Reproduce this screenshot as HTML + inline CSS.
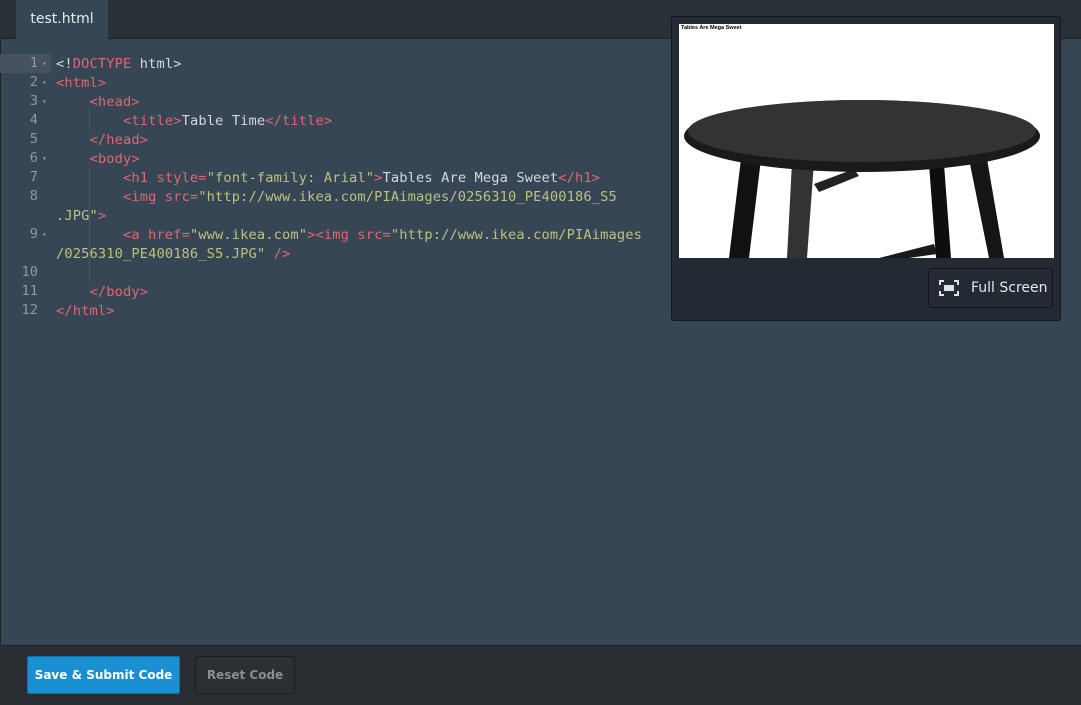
<!DOCTYPE html>
<html><head><style>
body{margin:0;width:1081px;height:704px;background:#374655;position:relative;overflow:hidden;font-family:"DejaVu Sans","Liberation Sans",sans-serif}
.tabbar{position:absolute;left:0;top:0;width:1081px;height:38px;background:#2a3037;border-bottom:1px solid #1d2228}
.tab{position:absolute;left:16px;top:0;width:92px;height:39px;background:#374655;color:#e8eaec;font-size:14px;line-height:38px;text-align:center}
.leftedge{position:absolute;left:0;top:38px;width:1px;height:607px;background:#222}
.code{position:absolute;left:0;top:54px;font-family:"DejaVu Sans Mono","Liberation Mono",monospace;font-size:13.7px;letter-spacing:0.13px;color:#d5d8dc}
.ln{position:absolute;left:0;width:1081px;height:19px;line-height:19px;white-space:pre}
.n{position:absolute;left:0;width:38px;text-align:right;color:#8e98a2;letter-spacing:0}
.a{position:absolute;left:42px;font-size:8px;color:#8e98a2}
.t{position:absolute;left:56px;top:1px}
.hl{position:absolute;left:0;top:0;width:51px;height:19px;background:#46525d}
.g{position:absolute;width:1px;background:#4b5864}
.r{color:#e06670}.s{color:#bcc27e}
.bottom{position:absolute;left:0;top:645px;width:1081px;height:59px;background:#2a2e33;border-top:1px solid #1d2024}
.b1{position:absolute;left:27px;top:656px;width:151px;height:36px;background:#1a8fd1;border:1px solid #0f6fa8;border-radius:2px;color:#fff;font-weight:bold;font-size:12px;line-height:37px;text-align:center}
.b2{position:absolute;left:195px;top:656px;width:98px;height:36px;background:#2c3034;border:1px solid #1b1e21;border-radius:3px;color:#8a8e92;font-weight:bold;font-size:12px;line-height:37px;text-align:center}
.panel{position:absolute;left:671px;top:16px;width:388px;height:303px;background:#232a33;border:1px solid #14181d;border-radius:3px}
.img{position:absolute;left:7px;top:7px;width:375px;height:234px;background:#fff;overflow:hidden}
.fs{position:absolute;left:256px;top:251px;width:123px;height:38px;border:1px solid #111519;border-radius:3px;background:#232a33;color:#e6e8ea;font-size:14px;line-height:38px}
</style></head><body>
<div class="tabbar"><div class="tab">test.html</div></div>
<div class="leftedge"></div>
<div class="code">
<div class="g" style="left:89px;top:57px;height:19px"></div>
<div class="g" style="left:89px;top:114px;height:114px"></div>
<div class="ln" style="top:0"><div class="hl"></div><span class="n">1</span><span class="a">▾</span><span class="t">&lt;!<span class="r">DOCTYPE</span> html&gt;</span></div>
<div class="ln" style="top:19px"><span class="n">2</span><span class="a">▾</span><span class="t r">&lt;html&gt;</span></div>
<div class="ln" style="top:38px"><span class="n">3</span><span class="a">▾</span><span class="t r">    &lt;head&gt;</span></div>
<div class="ln" style="top:57px"><span class="n">4</span><span class="t">        <span class="r">&lt;title&gt;</span>Table Time<span class="r">&lt;/title&gt;</span></span></div>
<div class="ln" style="top:76px"><span class="n">5</span><span class="t r">    &lt;/head&gt;</span></div>
<div class="ln" style="top:95px"><span class="n">6</span><span class="a">▾</span><span class="t r">    &lt;body&gt;</span></div>
<div class="ln" style="top:114px"><span class="n">7</span><span class="t">        <span class="r">&lt;h1 style=</span><span class="s">"font-family: Arial"</span><span class="r">&gt;</span>Tables Are Mega Sweet<span class="r">&lt;/h1&gt;</span></span></div>
<div class="ln" style="top:133px"><span class="n">8</span><span class="t">        <span class="r">&lt;img src=</span><span class="s">"http://www.ikea.com/PIAimages/0256310_PE400186_S5</span></span></div>
<div class="ln" style="top:152px"><span class="t"><span class="s">.JPG"</span><span class="r">&gt;</span></span></div>
<div class="ln" style="top:171px"><span class="n">9</span><span class="a">▾</span><span class="t">        <span class="r">&lt;a href=</span><span class="s">"www.ikea.com"</span><span class="r">&gt;&lt;img src=</span><span class="s">"http://www.ikea.com/PIAimages</span></span></div>
<div class="ln" style="top:190px"><span class="t"><span class="s">/0256310_PE400186_S5.JPG"</span> <span class="r">/&gt;</span></span></div>
<div class="ln" style="top:209px"><span class="n">10</span></div>
<div class="ln" style="top:228px"><span class="n">11</span><span class="t r">    &lt;/body&gt;</span></div>
<div class="ln" style="top:247px"><span class="n">12</span><span class="t r">&lt;/html&gt;</span></div>
</div>
<div class="panel">
<div class="img">
<div style="position:absolute;left:2px;top:1px;font-family:'Liberation Sans',sans-serif;font-size:5.5px;font-weight:bold;color:#000">Tables Are Mega Sweet</div>
<svg width="375" height="234" style="position:absolute;left:0;top:0">
<polygon points="62,135 82,135 70,234 50,234" fill="#111"/>
<polygon points="113,138 135,138 128,234 108,234" fill="#333"/>
<polygon points="135,160 175,145 180,152 140,168" fill="#222"/>
<polygon points="250,140 265,140 272,234 257,234" fill="#0e0e0e"/>
<polygon points="290,135 308,135 325,234 310,234" fill="#151515"/>
<polygon points="200,234 255,220 258,230 230,234" fill="#1a1a1a"/>
<ellipse cx="183" cy="112" rx="178" ry="36" fill="#1a1a1a"/>
<ellipse cx="183" cy="107" rx="174" ry="31" fill="#333"/>
</svg>
</div>
<div class="fs"><svg width="20" height="16" style="position:absolute;left:10px;top:11px" fill="none" stroke="#dfe2e5" stroke-width="2"><path d="M1 5V1h4M15 1h4v4M19 11v4h-4M5 15H1v-4"/><rect x="5" y="5" width="10" height="6" fill="#dfe2e5" stroke="none"/></svg><span style="position:absolute;left:42px">Full Screen</span></div>
</div>
<div class="bottom"></div>
<div class="b1">Save &amp; Submit Code</div>
<div class="b2">Reset Code</div>
</body></html>
